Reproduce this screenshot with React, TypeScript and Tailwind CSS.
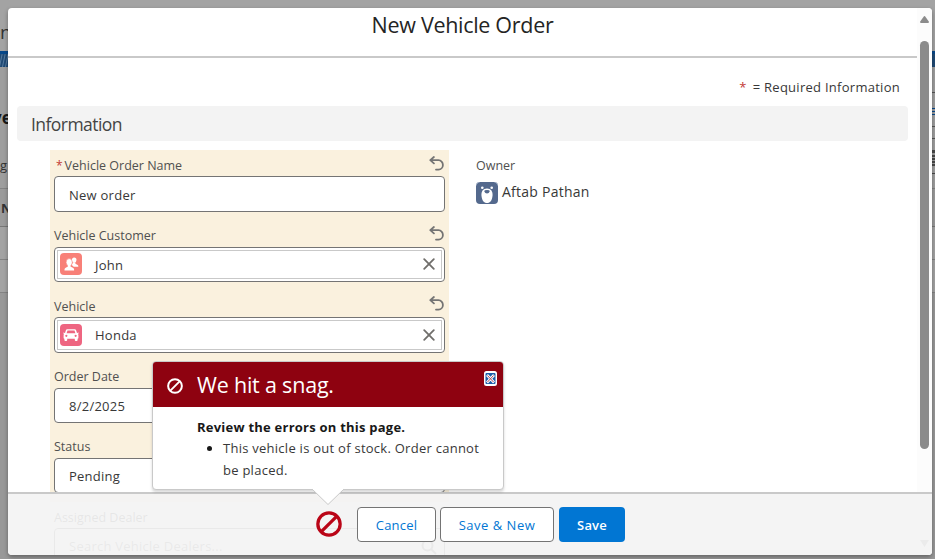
import React from "react";

function Undo() {
  return (
    <svg className="h-[15px] w-[15px]" viewBox="0 0 15 15" fill="none" stroke="#747474" strokeWidth="1.8" strokeLinecap="round" strokeLinejoin="round">
      <path d="M4.900 1 1.300 4.200 4.900 7.400M1.600 4.200H9.500a4.400 4.700 0 0 1 0 9.400H7" />
    </svg>
  );
}

function Close() {
  return (
    <svg className="h-3 w-3" viewBox="0 0 12 12" stroke="#706e6b" strokeWidth="1.8" strokeLinecap="round">
      <path d="m1.2 1.2 9.6 9.6M10.8 1.2l-9.6 9.6" />
    </svg>
  );
}

function People() {
  return (
    <svg className="h-[22px] w-[22px] shrink-0 rounded-[4px] bg-[#f88078]" viewBox="0 0 22 22" fill="#fff">
      <ellipse cx="14.2" cy="7" rx="2.3" ry="2.6" />
      <path d="M13.4 9.3h2v1.5l2.3 1.3q.6.4.6 1.1v.6h-4.6l-2.2-2z" />
      <ellipse cx="9.2" cy="9.3" rx="3.1" ry="3.7" stroke="#f88078" strokeWidth=".6" />
      <path d="M7.900 12h2.600v1.600l2.800 1.400q.8.5.8 1.500v.9H4.500v-.9q0-1 .8-1.500l2.600-1.400z" />
    </svg>
  );
}

function Car() {
  return (
    <svg className="h-[22px] w-[22px] shrink-0 rounded-[4px] bg-[#ee6581]" viewBox="0 0 22 22">
      <path fill="#fff" fillRule="evenodd" d="M7.2 5.2h7.6q.9 0 1.2.8l1 3h.4q.4-.7 1-.5.5.3.1 1l-.5.5q.4.4.4 1v2.8q0 .8-.8.9V16q0 1-1 1h-.8q-1 0-1-1v-1.3H7.2V16q0 1-1 1h-.8q-1 0-1-1v-1.3q-.8-.1-.8-.9V11q0-.6.4-1l-.5-.5q-.4-.7.1-1 .6-.2 1 .5H5l1-3q.3-.8 1.2-.8Zm.3 1.4L6.6 9.2h8.8l-.9-2.6ZM6.3 10.7a1.1 1.1 0 1 0 .1 0Zm9.3 0a1.1 1.1 0 1 0 .1 0Z" />
    </svg>
  );
}

function Bear() {
  return (
    <svg className="h-[22px] w-[22px] rounded-[4px] bg-[#54698d]" viewBox="0 0 22 22">
      <path d="M0 4V0h4Q1 1 0 4ZM22 4V0h-4q3 1 4 4Z" fill="#aebbd0" />
      <circle cx="6.300" cy="5.700" r="1.300" fill="#fff" />
      <circle cx="15.700" cy="5.700" r="1.300" fill="#fff" />
      <path d="M11 6.500c4 0 6 3 5.500 7.500-.5 4.500-2.400 7-5.500 7s-5-2.500-5.500-7C5 9.500 7 6.500 11 6.500Z" fill="#fff" />
      <path d="M8.200 9.300q0-1.400 2.800-1.400t2.800 1.400q-.8 2.200-2.800 2.200t-2.800-2.200Z" fill="#54698d" />
    </svg>
  );
}

function Ban({ className }: { className: string }) {
  return (
    <svg className={className} viewBox="0 0 24 24" fill="none" stroke="currentColor" strokeWidth="3">
      <circle cx="12" cy="12" r="10.300" />
      <path d="m4.700 19.300 14.600-14.600" />
    </svg>
  );
}

function Field({ label, required, undo = true, children }: { label: string; required?: boolean; undo?: boolean; children: React.ReactNode }) {
  return (
    <div className="h-[70.400px] px-1">
      <div className="flex h-[26.400px] items-center justify-between pr-px text-[12.500px] text-[#505050]">
        <span className="pt-[6px]">
          {required && <span className="mr-[2px] ml-[2px] text-[12px] text-[#c23934]">*</span>}
          {label}
        </span>
        {undo && <Undo />}
      </div>
      {children}
    </div>
  );
}

const box = "flex h-[35.400px] items-center rounded-[4px] border border-[#747474] bg-white text-[13px] tracking-[0.25px] text-[#383838]";

function Lookup({ icon, value }: { icon: React.ReactNode; value: string }) {
  return (
    <div className={box + " p-[2px]"}>
      <div className="flex h-full w-full items-center justify-between border border-[#c9c9c9] pr-[6px] pl-[2px]">
        <span className="flex items-center gap-[13px]">{icon}<span className="pt-[2px]">{value}</span></span>
        <Close />
      </div>
    </div>
  );
}

function Backdrop() {
  return (
    <div className="h-[559px] w-full overflow-hidden bg-[#a3a3a3] text-[#333]">
      <div className="h-[51px] pt-[20px] text-[19px] leading-[24px]">n</div>
      <div className="h-[3px] bg-[#07488a]" />
      <div className="flex h-[13px] gap-[2px] overflow-hidden bg-[#204a75]">
        <div className="h-4 w-px rotate-12 bg-[#557b9f]" />
        <div className="h-4 w-px rotate-12 bg-[#557b9f]" />
        <div className="h-4 w-px rotate-12 bg-[#557b9f]" />
      </div>
      <div className="flex h-[122px] justify-between border-b border-[#838383] bg-[#9e9e9e]">
        <div className="w-2 pt-[41px]">
          <div className="-ml-[8px] h-[42px] text-[17px] leading-[20px] font-bold text-[#181818]">ve</div>
          <div className="mt-[5px] text-[13px] leading-[20px]">g</div>
        </div>
        <div className="w-[3px] pt-[25px]">
          <div className="h-[16px] border-t border-[#555]" />
          <div className="h-[4px] border-y border-[#07488a]" />
          <div className="h-[3px] border-b border-[#07488a]" />
          <div className="h-[12px] border-b border-[#555]" />
          <div className="h-[12px] border-b border-[#555]" />
          <div className="mt-[11px] h-[3px] bg-[#484848]" />
          <div className="mt-[2px] h-[2px] bg-[#484848]" />
          <div className="mt-[1px] h-[2px] bg-[#484848]" />
          <div className="mt-[1px] h-[2px] bg-[#484848]" />
          <div className="mt-[1px] h-[2px] bg-[#484848]" />
          <div className="mt-[7px] h-px bg-[#484848]" />
        </div>
      </div>
      <div className="h-[38px] border-b border-[#777] bg-[#9b9b9b] pt-[9px] pl-px text-[13px] leading-[20px] font-bold">N</div>
      <div className="h-[33px] border-b border-[#838383]" />
      <div className="h-[33px] border-b border-[#838383]" />
      <div className="h-[266px] bg-[#989898]" />
    </div>
  );
}

export default function App() {
  return (
    <div className="relative h-[559px] w-[935px] overflow-hidden font-['Open_Sans','Noto_Sans',sans-serif]">
      <Backdrop />
      <section className="absolute top-[8px] left-[8px] flex h-[547px] w-[924px] overflow-hidden rounded-[4px] bg-white shadow-[0_2px_4px_rgba(0,0,0,0.35)]">
        <div className="w-[909px]">
          <h2 className="h-[50px] border-b-2 border-[#c9c9c9] pt-[3px] text-center text-[21.500px] leading-[28px] tracking-[-0.3px] text-[#242424]">New Vehicle Order</h2>
          <p className="flex h-[48px] items-center justify-end pt-[12px] pr-[17px] text-[13px] tracking-[0.27px] text-[#383838]">
            <span className="mr-[6px] text-[#c23934]">*</span>= Required Information
          </p>
          <h3 className="ml-[9px] flex h-[35px] w-[891px] items-center rounded-[4px] bg-[#f3f3f3] pt-[2px] pl-[14px] text-[17.500px] tracking-[-0.550px] text-[#444]">Information</h3>
          <div className="mt-[9px] ml-[42px] flex gap-[27px]">
            <div className="w-[399px]">
              <div className="bg-[#faf1de]">
                <Field label="Vehicle Order Name" required><div className={box + " px-[14px] pt-[3px]"}>New order</div></Field>
                <Field label="Vehicle Customer"><Lookup icon={<People />} value="John" /></Field>
                <Field label="Vehicle"><Lookup icon={<Car />} value="Honda" /></Field>
                <Field label="Order Date"><div className={box + " px-[14px] pt-[2px]"}>8/2/2025</div></Field>
                <Field label="Status"><div className={box + " px-[14px] pt-[2px]"}>Pending</div></Field>
              </div>
              <Field label="Assigned Dealer" undo={false}>
                <div className={box + " justify-between px-[14px] pt-px"}>
                  <span className="text-[#747474]">Search Vehicle Dealers...</span>
                  <svg className="-mr-[7px] h-4 w-4" viewBox="0 0 16 16" fill="none" stroke="#747474" strokeWidth="2"><circle cx="6.500" cy="6.500" r="5" /><path d="m10 10 5 5" /></svg>
                </div>
              </Field>
            </div>
            <div className="pt-[7px] text-[#505050]">
              <div className="text-[12.500px] leading-[18px]">Owner</div>
              <div className="mt-[7px] flex items-center gap-1 text-[14px] leading-[22px] tracking-[0.25px] text-[#383838]"><Bear /><span className="-mt-[2px]">Aftab Pathan</span></div>
            </div>
          </div>
        </div>
        <div className="flex w-[15px] flex-col items-center bg-[#fcfcfc]">
          <svg className="mt-[8px] h-[7px] w-[9px]" viewBox="0 0 9 7" fill="#8b8b8b"><path d="M3.600.7q.9-1.200 1.800 0L8.800 5.600Q9.200 7 8 7H1Q-.2 7 .2 5.600Z" /></svg>
          <div className="mt-[18px] h-[408px] w-[9px] rounded-full bg-[#8b8b8b]" />
          <svg className="mt-[91px] h-[7px] w-[9px]" viewBox="0 0 9 7" fill="#8b8b8b"><path d="M0 0h9L4.500 7Z" /></svg>
        </div>
        <footer className="absolute inset-x-0 bottom-0 flex h-[63px] items-start border-t-2 border-[#c9c9c9] bg-[#f3f3f3]/92 pt-[13px] pl-[308px] text-[13px] tracking-[0.2px] text-[#0176d3]">
          <Ban className="mt-[4px] mr-[15px] h-[26px] w-[26px] text-[#ba0517]" />
          <button className="mr-[4px] h-[35px] w-[79px] rounded-[4px] border border-[#747474] bg-white pt-[2px]">Cancel</button>
          <button className="mr-[5px] h-[35px] w-[114px] rounded-[4px] border border-[#747474] bg-white pt-[2px] tracking-[0.5px]">Save &amp; New</button>
          <button className="h-[35px] w-[66px] rounded-[4px] bg-[#0176d3] pt-[2px] font-semibold text-white">Save</button>
        </footer>
      </section>
      <section className="absolute top-[361px] left-[152px] h-[129px] w-[352px] rounded-[4px] border border-[#c9c9c9] bg-white shadow-[0_2px_3px_rgba(0,0,0,0.16)]">
        <header className="flex h-[45px] items-center rounded-t-[3px] bg-[#8e0210] pr-[6px] pl-[14px] text-white">
          <Ban className="mt-[2px] h-4 w-4" />
          <h2 className="ml-[14px] flex-1 pt-px text-[21.500px] leading-[28px] tracking-[-0.2px]">We hit a snag.</h2>
          <svg className="-mt-[13px] h-[15px] w-[13px]" viewBox="0 0 13 15">
            <rect width="13" height="15" rx="2.500" fill="#fff" />
            <rect x="1.500" y="2" width="10" height="11" rx="1" fill="#1b5da8" />
            <path d="m3 4 7 7.500M10 4l-7 7.500" stroke="#fff" strokeWidth="2.600" />
            <path d="m3.500 4.500 6 6.500M9.500 4.500l-6 6.500" stroke="#a8505f" strokeWidth="1" />
          </svg>
        </header>
        <div className="pt-[10px] pl-[44px] text-[13px] leading-[22px] tracking-[0.26px] text-[#383838]">
          <p className="leading-[20px] font-bold tracking-[0.23px] text-[#181818]">Review the errors on this page.</p>
          <ul className="list-disc pl-[26px] marker:text-[#181818]"><li>This vehicle is out of stock. Order cannot<br />be placed.</li></ul>
        </div>
        <svg className="absolute top-[126px] left-[158px] h-[18px] w-[34px]" viewBox="0 0 34 18"><path d="M1 1 17 16.500 33 1" fill="#fff" stroke="#c9c9c9" /><path d="M2 0h30v2H2z" fill="#fff" /></svg>
      </section>
    </div>
  );
}
